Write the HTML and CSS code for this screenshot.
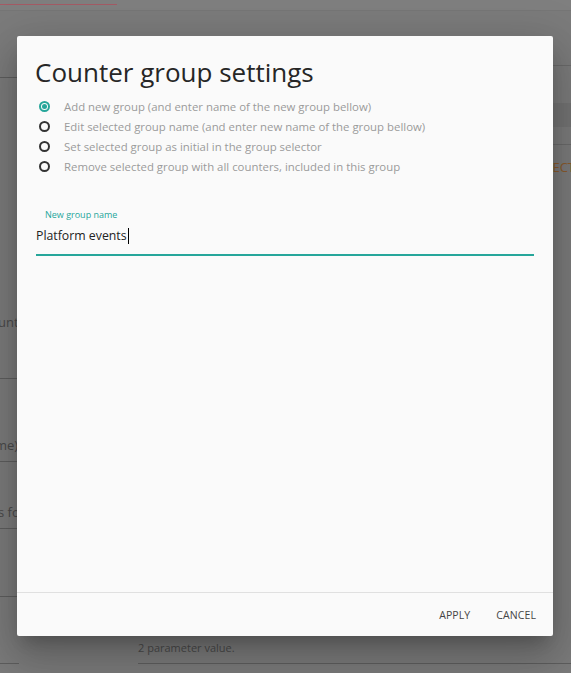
FILE: index.html
```html
<!DOCTYPE html>
<html>
<head>
<meta charset="utf-8">
<link rel="stylesheet" href="styles.css">
</head>
<body>
<div class="page">
  <div class="topbar"><div class="redline"></div></div>
  <div class="cols">
    <div class="leftcol">
      <div class="lrow r1"></div>
      <div class="lrow r2"><span class="ltext">unt</span></div>
      <div class="lrow r3"><span class="ltext shift">me)</span></div>
      <div class="lrow r4"><span class="ltext">s fo</span></div>
      <div class="lrow r5"></div>
      <div class="lrow r6"></div>
    </div>
    <div class="rightcol">
      <div class="rrow q1"></div>
      <div class="rrow q2"></div>
      <div class="rrow q3"><span class="orange">ECT</span></div>
      <div class="rrow q4"><span class="rtext">2 parameter value.</span></div>
    </div>
  </div>
</div>

<div class="dialog">
  <h1 class="title">Counter group settings</h1>
  <div class="radios">
    <label class="radio"><span class="dot checked"></span><span class="rlabel">Add new group (and enter name of the new group bellow)</span></label>
    <label class="radio"><span class="dot"></span><span class="rlabel">Edit selected group name (and enter new name of the group bellow)</span></label>
    <label class="radio"><span class="dot"></span><span class="rlabel">Set selected group as initial in the group selector</span></label>
    <label class="radio"><span class="dot"></span><span class="rlabel">Remove selected group with all counters, included in this group</span></label>
  </div>
  <div class="field">
    <div class="flabel">New group name</div>
    <div class="finput"><span>Platform events</span><span class="caret"></span></div>
  </div>
  <div class="spacer"></div>
  <div class="footer">
    <span class="btn">APPLY</span>
    <span class="btn">CANCEL</span>
  </div>
</div>
</body>
</html>
```
FILE: styles.css
```css
* { box-sizing: border-box; }
html, body { margin: 0; padding: 0; }
body {
  width: 571px;
  height: 673px;
  overflow: hidden;
  background: #7b7b7b;
  font-family: "Open Sans", "Noto Sans", sans-serif;
  position: relative;
}
.page { width: 571px; height: 673px; }
.topbar {
  height: 11px;
  background: #7f7f7f;
  border-bottom: 1px solid #767676;
  padding-top: 4px;
}
.redline { width: 117px; height: 1px; background: #a45a64; }
.cols { display: flex; }
.leftcol { width: 138px; }
.rightcol { flex: 1; display: flex; flex-direction: column; }
.lrow { border-bottom: 1px solid #5e5e5e; display: flex; align-items: flex-end; }
.r1 { height: 67px; }
.r2 { height: 301px; padding-bottom: 47px; }
.r3 { height: 83px; padding-bottom: 7px; }
.r4 { height: 67px; padding-bottom: 7px; }
.r5 { height: 68px; width: 19px; }
.r6 { height: 67px; width: 19px; }
.ltext { font-size: 13px; color: #4a4a4a; margin-left: -2px; white-space: nowrap; }
.ltext.shift { margin-left: -5px; }
.rrow { border-bottom: 1px solid #6a6a6a; }
.q1 { height: 55px; }
.q2 { border-top: 24px solid #737373; border-bottom: 1px solid #6a6a6a; margin-top: 37px; height: 42px; }
.q3 { height: 44px; border: none; display: flex; align-items: center; justify-content: flex-end; }
.orange { color: #8a5a2c; font-size: 13px; margin-right: -4px; }
.q4 { margin-top: auto; border-bottom: 1px solid #5e5e5e; height: 32px; display: flex; align-items: center; }
.rtext { font-size: 11px; color: #4a4a4a; }

.dialog {
  position: absolute;
  left: 17px;
  top: 36px;
  width: 536px;
  height: 600px;
  background: #fafafa;
  border-radius: 2px;
  box-shadow: 0 11px 15px -7px rgba(0,0,0,0.2), 0 24px 38px 3px rgba(0,0,0,0.14), 0 9px 46px 8px rgba(0,0,0,0.12);
  display: flex;
  flex-direction: column;
}
.title {
  margin: 19px 0 0 18px;
  font-weight: 400;
  font-size: 26px;
  line-height: 34px;
  color: #262626;
}
.radios {
  display: flex;
  flex-direction: column;
  margin: 7px 0 0 22px;
}
.radio {
  display: flex;
  align-items: center;
  height: 20px;
  gap: 14px;
}
.dot {
  width: 11px;
  height: 11px;
  border: 2px solid #333;
  border-radius: 50%;
  display: flex;
  align-items: center;
  justify-content: center;
  flex: none;
}
.dot.checked { border-color: #26a69a; }
.dot.checked::after {
  content: "";
  width: 5px;
  height: 5px;
  border-radius: 50%;
  background: #26a69a;
}
.rlabel { font-size: 11.4px; color: #9a9a9a; white-space: nowrap; }
.field { margin: 32px 19px 0 19px; }
.flabel { font-size: 9px; color: #26a69a; margin-left: 9px; line-height: 14px; }
.finput {
  font-size: 12.3px;
  color: #222;
  height: 34px;
  padding-top: 4px;
  line-height: 20px;
  border-bottom: 2px solid #26a69a;
  display: flex;
  align-items: flex-start;
}
.caret { width: 1px; height: 16px; background: #000; margin-top: 2px; margin-left: 1px; }
.spacer { flex: 1; }
.footer {
  height: 44px;
  border-top: 1px solid #e0e0e0;
  display: flex;
  justify-content: flex-end;
  align-items: center;
  gap: 26px;
  padding-right: 17px;
}
.btn { font-size: 10.5px; color: #444; letter-spacing: 0.1px; }
```
